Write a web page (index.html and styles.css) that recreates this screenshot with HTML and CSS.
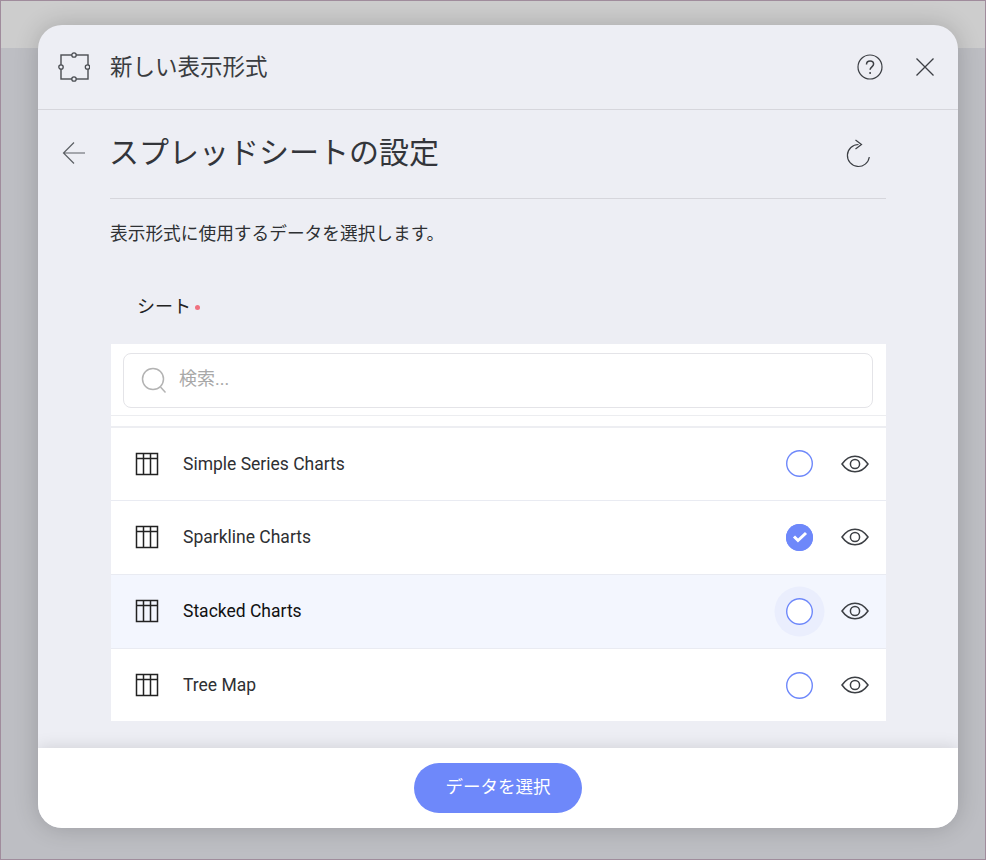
FILE: index.html
```html
<!DOCTYPE html>
<html lang="ja">
<head>
  <meta charset="UTF-8">
  <title>新しい表示形式</title>
  <link rel="stylesheet" href="styles.css">
</head>
<body>
  <div class="window">
    <div class="topstrip"></div>

    <div class="dialog">
      <header class="dialog-head">
        <svg class="viz-icon" width="32" height="30" viewBox="0 0 32 30" fill="none" stroke="#4a4d52" stroke-width="1.3">
          <rect x="3" y="3" width="27" height="24" stroke-width="1.4"/>
          <circle cx="16" cy="3" r="2.2" fill="#edeef4"/>
          <circle cx="16" cy="27" r="2.2" fill="#edeef4"/>
          <circle cx="3" cy="15" r="2.2" fill="#edeef4"/>
          <circle cx="29.500" cy="15" r="2.2" fill="#edeef4"/>
        </svg>
        <span class="dialog-title">新しい表示形式</span>
        <svg class="help-icon" width="26" height="26" viewBox="0 0 26 26" fill="none" stroke="#3c3f44" stroke-width="1.2">
          <circle cx="13" cy="13" r="12"/>
          <path d="M9.500 10.500c0-2.200 1.500-3.600 3.600-3.600s3.500 1.300 3.500 3.200c0 2.800-3.500 2.800-3.500 5.700" stroke-width="1.500"/>
          <circle cx="13.100" cy="19" r="1" fill="#3c3f44" stroke="none"/>
        </svg>
        <svg class="close-icon" width="20" height="20" viewBox="0 0 20 20" fill="none" stroke="#3c3f44" stroke-width="1.300">
          <path d="M1.500 1.500l17 17M18.500 1.500l-17 17"/>
        </svg>
      </header>

      <div class="dialog-body">
        <svg class="back-icon" width="24" height="24" viewBox="0 0 24 24" fill="none" stroke="#5c5f64" stroke-width="1.200">
          <path d="M23 12H2M12 1.500L1.500 12 12 22.500"/>
        </svg>

        <div class="content">
          <div class="sub-head">
            <h1>スプレッドシートの設定</h1>
            <svg class="refresh-icon" width="26" height="30" viewBox="0 0 26 30" fill="none" stroke="#3c3f44" stroke-width="1.200">
              <path d="M13.500 5.500a11 11 0 1 0 10.800 12.500"/>
              <path d="M10.500 1l6 4.500-6 4.500"/>
            </svg>
          </div>

          <p class="desc">表示形式に使用するデータを選択します。</p>
          <div class="field-label">シート<span class="required"></span></div>

          <div class="panel">
            <div class="search-wrap">
              <div class="search">
                <svg width="26" height="28" viewBox="0 0 26 28" fill="none" stroke="#b3b3b3" stroke-width="1.500">
                  <circle cx="12" cy="12" r="10.500"/>
                  <path d="M19.500 20l5 5.500"/>
                </svg>
                <span class="search-text">検索...</span>
              </div>
            </div>
            <div class="search-gap"></div>

            <div class="row first">
              <svg class="grid-icon" width="24" height="24" viewBox="0 0 24 24" fill="none" stroke="#222" stroke-width="1.500">
                <rect x="1.500" y="1.500" width="21" height="21"/>
                <path d="M1.500 6.500h21M8.500 1.500v21M15.500 1.500v21"/>
              </svg>
              <span class="row-name">Simple Series Charts</span>
              <span class="radio"></span>
              <svg class="eye-icon" width="28" height="18" viewBox="0 0 28 18" fill="none" stroke="#3c3f44" stroke-width="1.500">
                <path d="M1 9c3.500-5 8-7.800 13-7.800S23.500 4 27 9c-3.500 5-8 7.800-13 7.800S4.500 14 1 9z"/>
                <circle cx="14" cy="9" r="4.600"/>
              </svg>
            </div>

            <div class="row">
              <svg class="grid-icon" width="24" height="24" viewBox="0 0 24 24" fill="none" stroke="#222" stroke-width="1.500">
                <rect x="1.500" y="1.500" width="21" height="21"/>
                <path d="M1.500 6.500h21M8.500 1.500v21M15.500 1.500v21"/>
              </svg>
              <span class="row-name">Sparkline Charts</span>
              <span class="radio checked">
                <svg width="16" height="12" viewBox="0 0 16 12" fill="none" stroke="#fff" stroke-width="3">
                  <path d="M2 5.500l4 4 8-7.500"/>
                </svg>
              </span>
              <svg class="eye-icon" width="28" height="18" viewBox="0 0 28 18" fill="none" stroke="#3c3f44" stroke-width="1.500">
                <path d="M1 9c3.500-5 8-7.800 13-7.800S23.500 4 27 9c-3.500 5-8 7.800-13 7.800S4.500 14 1 9z"/>
                <circle cx="14" cy="9" r="4.600"/>
              </svg>
            </div>

            <div class="row hover">
              <svg class="grid-icon" width="24" height="24" viewBox="0 0 24 24" fill="none" stroke="#222" stroke-width="1.500">
                <rect x="1.500" y="1.500" width="21" height="21"/>
                <path d="M1.500 6.500h21M8.500 1.500v21M15.500 1.500v21"/>
              </svg>
              <span class="row-name">Stacked Charts</span>
              <span class="radio halo"></span>
              <svg class="eye-icon" width="28" height="18" viewBox="0 0 28 18" fill="none" stroke="#3c3f44" stroke-width="1.500">
                <path d="M1 9c3.500-5 8-7.800 13-7.800S23.500 4 27 9c-3.500 5-8 7.800-13 7.800S4.500 14 1 9z"/>
                <circle cx="14" cy="9" r="4.600"/>
              </svg>
            </div>

            <div class="row last">
              <svg class="grid-icon" width="24" height="24" viewBox="0 0 24 24" fill="none" stroke="#222" stroke-width="1.500">
                <rect x="1.500" y="1.500" width="21" height="21"/>
                <path d="M1.500 6.500h21M8.500 1.500v21M15.500 1.500v21"/>
              </svg>
              <span class="row-name">Tree Map</span>
              <span class="radio"></span>
              <svg class="eye-icon" width="28" height="18" viewBox="0 0 28 18" fill="none" stroke="#3c3f44" stroke-width="1.500">
                <path d="M1 9c3.500-5 8-7.800 13-7.800S23.500 4 27 9c-3.500 5-8 7.800-13 7.800S4.500 14 1 9z"/>
                <circle cx="14" cy="9" r="4.600"/>
              </svg>
            </div>
          </div>
        </div>
      </div>

      <footer class="dialog-foot">
        <button class="select-btn">データを選択</button>
      </footer>
    </div>
  </div>
</body>
</html>
```

FILE: styles.css
```css
* {
  box-sizing: border-box;
}

html, body {
  margin: 0;
  height: 100%;
}

body {
  font-family: Roboto, "Noto Sans CJK JP", sans-serif;
  color: #2e3033;
  overflow: hidden;
}

.window {
  position: relative;
  width: 986px;
  height: 860px;
  background-color: #bdbec3;
  border: 1px solid #a08c9c;
}

.topstrip {
  height: 47px;
  background-color: #cdcdcd;
}

.dialog {
  position: absolute;
  left: 37px;
  top: 24px;
  width: 920px;
  height: 803px;
  display: flex;
  flex-direction: column;
  background-color: #edeef4;
  border-radius: 24px;
  overflow: hidden;
  box-shadow: 0 0 24px #00000030;
}

.dialog-head {
  flex: none;
  height: 85px;
  display: flex;
  align-items: center;
  padding: 0 23px 0 20px;
  border-bottom: 1px solid #d6d6dc;
}

.dialog-title {
  flex: 1;
  margin: 0 0 4px 20px;
  font-size: 22.500px;
  color: #3a3c40;
}

.help-icon {
  margin-right: 32px;
}

.dialog-body {
  flex: 1;
  display: flex;
  min-height: 0;
}

.back-icon {
  flex: none;
  margin: 31px 0 0 24px;
}

.content {
  width: 776px;
  margin-left: 24px;
}

.sub-head {
  height: 89px;
  display: flex;
  align-items: center;
  justify-content: space-between;
  padding: 0 14px 0 0;
  border-bottom: 1px solid #d6d6dc;
}

h1 {
  margin: 0 0 8px -1px;
  font-size: 30px;
  font-weight: 400;
  color: #33353a;
}

.refresh-icon {
  margin-right: 1px;
}

.desc {
  margin: 22px 0 0;
  font-size: 17.700px;
  line-height: 26px;
}

.field-label {
  display: flex;
  align-items: center;
  margin: 47px 0 0 27px;
  font-size: 18px;
  line-height: 26px;
  color: #222;
}

.required {
  width: 5px;
  height: 5px;
  margin-left: 4px;
  border-radius: 50%;
  background-color: #f0717f;
}

.panel {
  margin: 24px 0 0 1px;
  width: 775px;
  background-color: #fff;
}

.search-wrap {
  padding: 9px 13px 7px 12px;
  border-bottom: 1px solid #ecedf0;
}

.search {
  height: 55px;
  display: flex;
  align-items: center;
  gap: 12px;
  padding-left: 17px;
  border: 1px solid #e4e4e8;
  border-radius: 8px;
  font-size: 18px;
  color: #a8a8a8;
}

.search-text {
  margin-bottom: 8px;
}

.search-gap {
  height: 12px;
  border-bottom: 2px solid #edeef2;
}

.row {
  height: 74px;
  display: flex;
  align-items: center;
  padding: 0 17.500px 1px 24px;
  border-bottom: 1px solid #e9ebf2;
}

.row.first {
  height: 73px;
}

.row.last {
  height: 72px;
  padding-bottom: 0;
  border-bottom: none;
}

.row.hover {
  background-color: #f3f6fe;
  color: #111;
}

.row-name {
  flex: 1;
  margin-left: 24px;
  font-size: 17.500px;
}

.radio {
  width: 27px;
  height: 27px;
  margin-right: 27.500px;
  display: flex;
  align-items: center;
  justify-content: center;
  border-radius: 50%;
  background-color: #fff;
  box-shadow: inset 0 0 0 1.400px #6e88fa;
}

.radio.checked {
  background-color: #6e88fa;
}

.radio.halo {
  box-shadow: inset 0 0 0 1.400px #6e88fa, 0 0 0 11.500px #eaeefd;
}

.dialog-foot {
  position: absolute;
  left: 0;
  right: 0;
  bottom: 0;
  height: 80px;
  display: flex;
  align-items: center;
  justify-content: center;
  background-color: #fff;
  box-shadow: 0 0 16px #00000022;
}

.select-btn {
  width: 168px;
  height: 50px;
  padding-bottom: 6px;
  border: none;
  border-radius: 25px;
  background-color: #6e88fa;
  color: #fff;
  font-family: inherit;
  font-size: 17.500px;
}
```
